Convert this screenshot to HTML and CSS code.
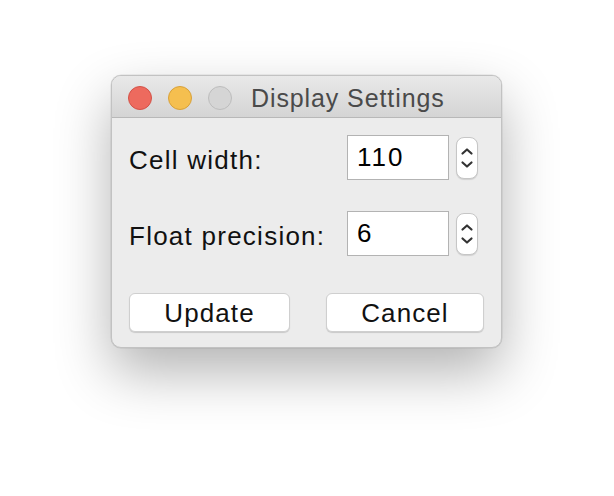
FILE: index.html
```html
<!DOCTYPE html>
<html>
<head>
<meta charset="utf-8">
<link rel="stylesheet" href="styles.css">
</head>
<body>
<div class="desk">
  <div class="window">
    <div class="titlebar">
      <div class="lights">
        <span class="light red"></span>
        <span class="light yellow"></span>
        <span class="light grey"></span>
      </div>
      <div class="title">Display Settings</div>
    </div>
    <div class="content">
      <div class="row">
        <div class="label">Cell width:</div>
        <div class="spin">
          <div class="field">110</div>
          <div class="stepper">
            <svg width="20" height="42" viewBox="0 0 20 42"><path d="M5.5 16.5 L10 12.5 L14.5 16.5" fill="none" stroke="#333" stroke-width="2.2" stroke-linecap="round" stroke-linejoin="round"/><path d="M5.5 25.5 L10 29.5 L14.5 25.5" fill="none" stroke="#333" stroke-width="2.2" stroke-linecap="round" stroke-linejoin="round"/></svg>
          </div>
        </div>
      </div>
      <div class="row row2">
        <div class="label">Float precision:</div>
        <div class="spin">
          <div class="field">6</div>
          <div class="stepper">
            <svg width="20" height="42" viewBox="0 0 20 42"><path d="M5.5 16.5 L10 12.5 L14.5 16.5" fill="none" stroke="#333" stroke-width="2.2" stroke-linecap="round" stroke-linejoin="round"/><path d="M5.5 25.5 L10 29.5 L14.5 25.5" fill="none" stroke="#333" stroke-width="2.2" stroke-linecap="round" stroke-linejoin="round"/></svg>
          </div>
        </div>
      </div>
      <div class="buttons">
        <div class="btn update">Update</div>
        <div class="btn cancel">Cancel</div>
      </div>
    </div>
  </div>
</div>
</body>
</html>
```
FILE: styles.css
```css
html, body {
  margin: 0;
  padding: 0;
  background: #ffffff;
}
body {
  width: 614px;
  height: 496px;
  overflow: hidden;
  font-family: "Liberation Sans", Arial, sans-serif;
}
.desk {
  display: flex;
  justify-content: flex-start;
  padding-top: 75px;
  padding-left: 111px;
}
.window {
  width: 391px;
  height: 273px;
  box-sizing: border-box;
  border-radius: 10px;
  background: #ececec;
  border: 1px solid #c2c2c2;
  box-shadow: 0 24px 55px rgba(0,0,0,0.3), 0 0 0 0.5px rgba(0,0,0,0.1);
  overflow: hidden;
  display: flex;
  flex-direction: column;
}
.titlebar {
  height: 42px;
  box-sizing: border-box;
  background: linear-gradient(#e9e9e9, #d4d4d4);
  border-bottom: 1px solid #b8b8b8;
  display: flex;
  align-items: center;
  padding-left: 16px;
  padding-top: 2px;
}
.lights {
  display: flex;
  gap: 16px;
}
.light {
  width: 24px;
  height: 24px;
  border-radius: 50%;
  box-sizing: border-box;
}
.red { background: #ed6a5e; border: 1px solid #d35248; }
.yellow { background: #f5bf4f; border: 1px solid #d8a13a; }
.grey { background: #d5d5d5; border: 1px solid #bdbdbd; }
.title {
  margin-left: 19px;
  font-size: 25px;
  color: #4a4a4a;
  letter-spacing: 0.9px;
  padding-top: 2px;
}
.content {
  padding: 17px 23px 0 17px;
  display: flex;
  flex-direction: column;
}
.row {
  display: flex;
  align-items: center;
  justify-content: space-between;
  height: 45px;
}
.row2 {
  margin-top: 31px;
}
.label {
  font-size: 26px;
  color: #111;
  letter-spacing: 1.25px;
  padding-top: 6px;
}
.spin {
  display: flex;
  align-items: center;
  gap: 7px;
}
.field {
  width: 102px;
  height: 45px;
  box-sizing: border-box;
  background: #fff;
  border: 1px solid #b3b3b3;
  font-size: 26px;
  color: #000;
  letter-spacing: 2px;
  padding-left: 9px;
  display: flex;
  align-items: center;
}
.stepper {
  width: 22px;
  height: 42px;
  box-sizing: border-box;
  background: #fff;
  border: 1px solid #c6c6c6;
  border-radius: 8px;
  box-shadow: 0 1px 1px rgba(0,0,0,0.12);
  display: flex;
  align-items: center;
  justify-content: center;
}
.buttons {
  display: flex;
  justify-content: space-between;
  margin-top: 37px;
}
.btn {
  height: 39px;
  box-sizing: border-box;
  background: #fff;
  border: 1px solid #cfcfcf;
  border-radius: 6px;
  box-shadow: 0 1px 1px rgba(0,0,0,0.15);
  font-size: 26px;
  letter-spacing: 1.1px;
  color: #111;
  display: flex;
  align-items: center;
  justify-content: center;
  padding-top: 1px;
}
.update { width: 161px; }
.cancel { width: 158px; margin-right: -6px; }
```
